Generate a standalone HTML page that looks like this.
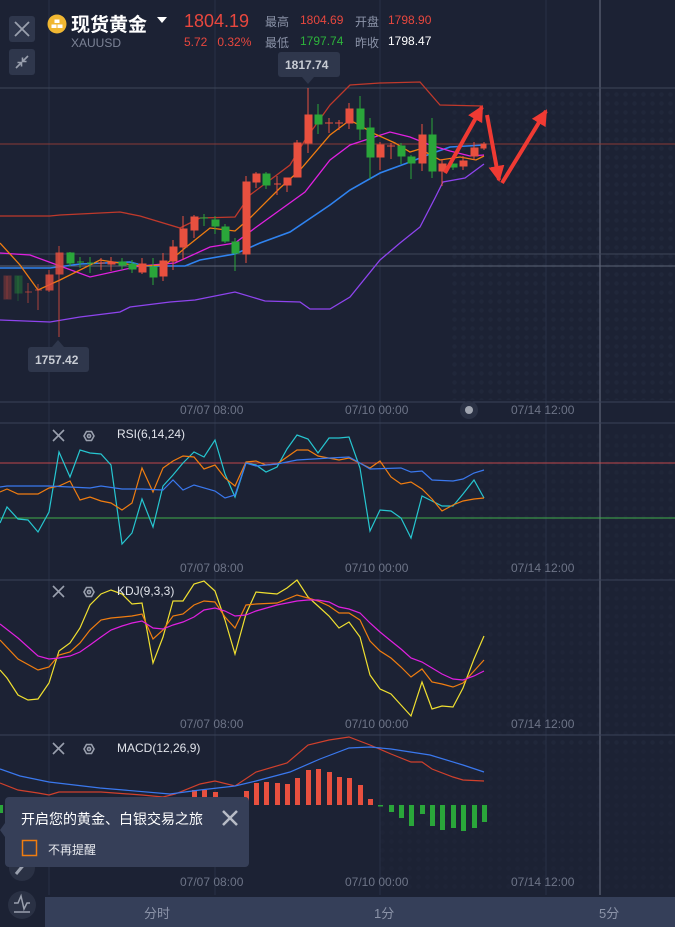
<!DOCTYPE html>
<html><head><meta charset="utf-8"><style>
html,body{margin:0;padding:0;background:#1c2234;width:675px;height:927px;overflow:hidden;font-family:"Liberation Sans","Noto Sans CJK SC",sans-serif}
.a{position:absolute;white-space:nowrap}
</style></head><body>
<svg class="a" style="left:0;top:0" width="675" height="927" xmlns="http://www.w3.org/2000/svg">
<defs>
<marker id="ah" markerUnits="userSpaceOnUse" markerWidth="18" markerHeight="16" refX="14" refY="8" orient="auto"><polygon points="0,0 16,8 0,16" fill="#f03a33"/></marker>
<pattern id="dots" width="9" height="9" patternUnits="userSpaceOnUse"><circle cx="4.5" cy="4.5" r="2.2" fill="#252c40"/></pattern>
</defs>
<rect x="450" y="90" width="225" height="310" fill="url(#dots)" opacity="0.5"/>
<rect x="460" y="430" width="215" height="150" fill="url(#dots)" opacity="0.35"/>
<rect x="460" y="585" width="215" height="160" fill="url(#dots)" opacity="0.3"/>
<rect x="380" y="740" width="295" height="150" fill="url(#dots)" opacity="0.25"/>
<g stroke="#283046" stroke-width="1">
<line x1="49" y1="0" x2="49" y2="895"/><line x1="215" y1="0" x2="215" y2="895"/><line x1="380" y1="0" x2="380" y2="895"/><line x1="546" y1="0" x2="546" y2="895"/>
</g>
<line x1="600" y1="0" x2="600" y2="895" stroke="#6b7285" stroke-width="1"/>
<line x1="0" y1="88" x2="675" y2="88" stroke="#3e4659"/>
<line x1="0" y1="254" x2="675" y2="254" stroke="#3e4659"/>
<line x1="0" y1="266" x2="675" y2="266" stroke="#5d6476"/>
<line x1="0" y1="144" x2="675" y2="144" stroke="#8a3a36"/>
<line x1="0" y1="402" x2="675" y2="402" stroke="#3a4258"/>
<line x1="0" y1="423" x2="675" y2="423" stroke="#3a4258"/>
<line x1="0" y1="580" x2="675" y2="580" stroke="#3a4258"/>
<line x1="0" y1="735" x2="675" y2="735" stroke="#3a4258"/>
<g transform="translate(0,80)" fill="none" stroke-width="1.3">
<polyline stroke="#c0392b" points="0,136 50,136 60,135 120,132 140,136 180,148 200,138 235,137 250,115 290,85 305,60 330,25 350,5 380,3 420,2 440,25 483,26"/>
<polyline stroke="#8e44ee" points="0,240 50,242 80,237 120,232 130,227 170,222 195,220 235,212 265,221 300,222 310,229 330,229 350,217 380,180 400,163 420,147 435,118 443,102 465,98 484,84"/>
<polyline stroke="#2f83f0" stroke-width="1.6" points="0,188 50,188 80,184 130,182 145,186 185,186 200,180 235,174 260,163 290,152 330,125 350,110 380,93 410,82 430,74 450,67 484,65"/>
<polyline stroke="#e020e0" points="0,173 30,175 60,186 90,197 140,186 175,183 210,167 235,163 255,148 280,130 305,112 330,80 350,65 390,52 410,57 430,65 450,71 470,76 484,75"/>
<polyline stroke="#f07d10" points="0,163 20,185 38,210 60,200 100,180 140,186 165,185 185,168 210,148 235,151 250,138 280,108 300,90 330,55 350,40 375,54 395,63 410,72 420,69 440,80 460,77 476,80 484,76"/>
</g>
<g transform="translate(0,80)" stroke-width="1">
<g fill="#e8503f" stroke="#e8503f">
<line x1="7" y1="196" x2="7" y2="219" opacity=".3"/><rect x="4" y="196" width="7" height="23" opacity=".3"/>
<line x1="28" y1="203" x2="28" y2="223" opacity=".6"/><line x1="25" y1="212" x2="32" y2="212" opacity=".6"/>
<line x1="38" y1="204" x2="38" y2="230" opacity=".7"/><line x1="35" y1="210" x2="42" y2="210" opacity=".7"/>
<line x1="49" y1="190" x2="49" y2="212" opacity=".8"/><rect x="46" y="195" width="7" height="15" opacity=".8"/>
<line x1="59" y1="166" x2="59" y2="257" opacity=".8"/><rect x="56" y="173" width="7" height="21" opacity=".8"/>
<line x1="101" y1="178" x2="101" y2="190"/><line x1="98" y1="183" x2="105" y2="183"/>
<line x1="111" y1="177" x2="111" y2="191"/><rect x="108" y="182" width="7" height="2"/>
<line x1="142" y1="178" x2="142" y2="194"/><rect x="139" y="184" width="7" height="8"/>
<line x1="163" y1="173" x2="163" y2="201"/><rect x="160" y="181" width="7" height="15"/>
<line x1="173" y1="160" x2="173" y2="190"/><rect x="170" y="167" width="7" height="14"/>
<line x1="183" y1="136" x2="183" y2="180"/><rect x="180" y="149" width="7" height="18"/>
<line x1="194" y1="135" x2="194" y2="158"/><rect x="191" y="137" width="7" height="13"/>
<line x1="246" y1="96" x2="246" y2="183"/><rect x="243" y="102" width="7" height="72"/>
<line x1="256" y1="92" x2="256" y2="108"/><rect x="253" y="94" width="7" height="8"/>
<line x1="277" y1="96" x2="277" y2="115"/><line x1="274" y1="104" x2="281" y2="104"/>
<line x1="287" y1="98" x2="287" y2="112"/><rect x="284" y="98" width="7" height="7"/>
<line x1="297" y1="60" x2="297" y2="97"/><rect x="294" y="63" width="7" height="34"/>
<line x1="308" y1="8" x2="308" y2="73"/><rect x="305" y="35" width="7" height="28"/>
<line x1="329" y1="38" x2="329" y2="53"/><line x1="325" y1="43" x2="333" y2="43"/>
<line x1="339" y1="40" x2="339" y2="50"/><line x1="335" y1="43" x2="343" y2="43"/>
<line x1="349" y1="23" x2="349" y2="49"/><rect x="346" y="29" width="7" height="14"/>
<line x1="380" y1="62" x2="380" y2="90"/><rect x="377" y="65" width="7" height="12"/>
<line x1="391" y1="63" x2="391" y2="79"/><line x1="387" y1="66" x2="395" y2="66"/>
<line x1="422" y1="44" x2="422" y2="91"/><rect x="419" y="55" width="7" height="28"/>
<line x1="442" y1="79" x2="442" y2="106"/><rect x="439" y="84" width="7" height="7"/>
<line x1="463" y1="76" x2="463" y2="90"/><rect x="460" y="81" width="7" height="5"/>
<line x1="474" y1="62" x2="474" y2="80"/><rect x="471" y="68" width="7" height="8"/>
<line x1="484" y1="62" x2="484" y2="70"/><rect x="481" y="64" width="5" height="4"/>
</g>
<g fill="#2aa63a" stroke="#2aa63a">
<line x1="18" y1="196" x2="18" y2="221" opacity=".35"/><rect x="15" y="196" width="7" height="17" opacity=".35"/>
<line x1="70" y1="172" x2="70" y2="186"/><rect x="67" y="173" width="7" height="10"/>
<line x1="80" y1="177" x2="80" y2="188"/><line x1="77" y1="182" x2="84" y2="182"/>
<line x1="90" y1="177" x2="90" y2="193"/><line x1="87" y1="183" x2="94" y2="183"/>
<line x1="122" y1="178" x2="122" y2="190"/><rect x="119" y="182" width="7" height="3"/>
<line x1="132" y1="180" x2="132" y2="193"/><rect x="129" y="184" width="7" height="5"/>
<line x1="153" y1="178" x2="153" y2="205"/><rect x="150" y="187" width="7" height="10"/>
<line x1="204" y1="134" x2="204" y2="146"/><line x1="200" y1="138" x2="208" y2="138"/>
<line x1="215" y1="136" x2="215" y2="154"/><rect x="212" y="140" width="7" height="6"/>
<line x1="225" y1="144" x2="225" y2="163"/><rect x="222" y="147" width="7" height="14"/>
<line x1="235" y1="158" x2="235" y2="191"/><rect x="232" y="162" width="7" height="11"/>
<line x1="266" y1="92" x2="266" y2="109"/><rect x="263" y="94" width="7" height="11"/>
<line x1="318" y1="24" x2="318" y2="54"/><rect x="315" y="35" width="7" height="9"/>
<line x1="360" y1="16" x2="360" y2="60"/><rect x="357" y="29" width="7" height="20"/>
<line x1="370" y1="38" x2="370" y2="99"/><rect x="367" y="48" width="7" height="29"/>
<line x1="401" y1="63" x2="401" y2="84"/><rect x="398" y="66" width="7" height="10"/>
<line x1="411" y1="75" x2="411" y2="99"/><rect x="408" y="77" width="7" height="6"/>
<line x1="432" y1="38" x2="432" y2="98"/><rect x="429" y="55" width="7" height="36"/>
<line x1="453" y1="84" x2="453" y2="90"/><rect x="450" y="84" width="7" height="3"/>
</g>
</g>
<g stroke="#f03a33" stroke-width="4" fill="none" marker-end="url(#ah)">
<line x1="445" y1="173" x2="482" y2="107"/>
<line x1="487" y1="115" x2="499" y2="180"/>
<line x1="502" y1="183" x2="546" y2="111"/>
</g>
<line x1="0" y1="463" x2="675" y2="463" stroke="#c0474a"/>
<line x1="0" y1="518" x2="675" y2="518" stroke="#3fae4a"/>
<g fill="none" stroke-width="1.2">
<polyline stroke="#26c6d0" points="0,523 7,507 18,519 28,520 38,532 49,512 59,452 70,477 80,450 90,453 101,454 111,465 122,544 132,533 142,499 153,527 163,486 173,475 183,463 194,452 204,457 215,440 225,474 235,497 246,463 256,465 266,472 277,467 287,449 297,435 308,439 318,453 329,438 339,438 349,437 360,468 370,531 380,510 391,511 401,518 411,538 422,496 432,501 442,506 453,506 463,494 474,480 484,498"/>
<polyline stroke="#f07d10" points="0,492 7,489 18,494 38,494 49,488 59,486 70,481 80,500 90,497 101,501 111,503 122,510 132,503 142,468 153,492 163,468 173,461 183,456 194,457 204,469 215,465 225,478 235,486 246,462 256,461 266,465 277,464 297,450 308,450 318,456 339,460 349,458 370,468 380,461 391,477 401,484 411,482 422,489 432,499 442,511 453,505 463,501 474,499 484,498"/>
<polyline stroke="#3a78ee" points="0,487 7,486 28,486 49,486 70,487 90,488 101,486 122,489 142,489 163,490 173,480 183,490 194,485 215,491 225,498 235,495 246,463 256,466 277,464 297,460 330,458 349,457 360,463 370,469 401,468 411,472 422,471 432,480 453,481 463,479 474,473 484,470"/>
</g>
<g fill="none" stroke-width="1.2">
<polyline stroke="#f0e030" points="0,670 7,678 18,695 28,700 38,699 49,683 59,651 70,643 80,628 90,605 101,594 111,590 122,594 132,604 142,603 153,663 163,637 173,601 183,601 194,584 204,581 215,591 225,620 235,654 246,614 256,592 266,593 277,594 287,588 297,580 308,597 318,606 329,616 339,628 349,622 360,637 370,675 380,689 391,694 401,705 411,716 422,682 432,709 442,706 453,707 463,688 474,659 484,636"/>
<polyline stroke="#f07d10" points="0,640 18,659 38,670 49,667 59,655 70,652 80,643 90,630 101,620 111,618 122,617 132,616 142,614 153,639 163,630 173,616 183,614 194,605 204,601 215,602 225,617 235,628 246,605 256,604 277,603 297,595 308,598 318,601 329,606 339,613 349,613 360,620 370,641 380,651 391,658 401,667 411,677 422,669 432,682 442,684 453,687 463,683 474,671 484,660"/>
<polyline stroke="#e020e0" points="0,624 18,638 38,656 49,659 59,658 70,656 80,652 90,645 101,637 111,630 122,626 132,623 142,621 153,628 163,629 173,625 183,622 194,617 204,610 215,608 225,611 235,616 246,615 256,611 277,605 297,601 308,600 318,600 329,602 339,607 349,609 360,613 370,623 380,632 391,641 401,649 411,658 422,662 432,668 442,674 453,679 463,680 474,676 484,671"/>
</g>
<g fill="#e8503f">
<rect x="192" y="790" width="5" height="15"/><rect x="202" y="790" width="5" height="15"/><rect x="213" y="792" width="5" height="13"/><rect x="223" y="797" width="5" height="8"/><rect x="244" y="791" width="5" height="14"/><rect x="254" y="783" width="5" height="22"/><rect x="264" y="782" width="5" height="23"/><rect x="275" y="783" width="5" height="22"/><rect x="285" y="784" width="5" height="21"/><rect x="295" y="778" width="5" height="27"/><rect x="306" y="770" width="5" height="35"/><rect x="316" y="769" width="5" height="36"/><rect x="327" y="772" width="5" height="33"/><rect x="337" y="777" width="5" height="28"/><rect x="347" y="778" width="5" height="27"/><rect x="358" y="785" width="5" height="20"/><rect x="368" y="799" width="5" height="6"/>
</g>
<g fill="#2aa63a">
<rect x="378" y="805" width="5" height="1.5"/><rect x="389" y="805" width="5" height="7"/><rect x="399" y="805" width="5" height="13"/><rect x="409" y="805" width="5" height="21"/><rect x="420" y="805" width="5" height="9"/><rect x="430" y="805" width="5" height="21"/><rect x="440" y="805" width="5" height="25"/><rect x="451" y="805" width="5" height="23"/><rect x="461" y="805" width="5" height="26"/><rect x="472" y="805" width="5" height="23"/><rect x="482" y="805" width="5" height="17"/>
<rect x="0" y="805" width="3" height="8"/>
</g>
<g fill="none" stroke-width="1.2">
<polyline stroke="#d0402c" points="0,783 18,790 38,793 49,795 59,792 101,792 142,795 163,797 175,794 200,784 215,781 235,786 256,772 287,763 308,745 329,740 349,737 370,745 391,754 411,762 422,762 432,769 453,777 463,780 484,781"/>
<polyline stroke="#3a78ee" points="0,769 20,776 49,782 100,788 170,794 200,790 235,786 256,781 290,772 320,759 349,748 370,747 391,749 430,755 463,765 484,772"/>
</g>
<g stroke="#9aa0ae" stroke-width="1.6" fill="none">
<path d="M53 430 L64 441 M64 430 L53 441"/><path d="M53 586 L64 597 M64 586 L53 597"/><path d="M53 743 L64 754 M64 743 L53 754"/>
<polygon points="84,436 86.5,431.5 91.5,431.5 94,436 91.5,440.5 86.5,440.5"/><circle cx="89" cy="436" r="1.6"/>
<polygon points="84,592 86.5,587.5 91.5,587.5 94,592 91.5,596.5 86.5,596.5"/><circle cx="89" cy="592" r="1.6"/>
<polygon points="84,749 86.5,744.5 91.5,744.5 94,749 91.5,753.5 86.5,753.5"/><circle cx="89" cy="749" r="1.6"/>
</g>
<rect x="9" y="16" width="26" height="26" rx="3" fill="#2f374c"/>
<path d="M15 22 L29 36 M29 22 L15 36" stroke="#9aa0ae" stroke-width="1.8"/>
<rect x="9" y="49" width="26" height="26" rx="3" fill="#2f374c"/>
<path d="M16 68 L21 63 M17.5 62.5 L21.5 62.5 L21.5 66.5 M28 56 L23 61 M22.5 57.5 L22.5 61.5 L26.5 61.5" stroke="#9aa0ae" stroke-width="1.6" fill="none"/>
<circle cx="57" cy="24" r="9.5" fill="#f0b732"/>
<rect x="54.5" y="19.5" width="5" height="3.5" fill="#fff"/><rect x="51.5" y="24.5" width="5" height="3.5" fill="#fff"/><rect x="57.5" y="24.5" width="5" height="3.5" fill="#fff"/>
<polygon points="157,17 167,17 162,23" fill="#fff"/>
<rect x="278" y="52" width="62" height="25" rx="3" fill="#2f374c"/><polygon points="302,77 314,77 308,84" fill="#2f374c"/>
<rect x="28" y="347" width="61" height="25" rx="3" fill="#2f374c"/><polygon points="52,347 64,347 58,340" fill="#2f374c"/>
<circle cx="469" cy="410" r="9" fill="#2a3144"/><circle cx="469" cy="410" r="4" fill="#a0a5b0"/>
<circle cx="22" cy="868" r="13" fill="#2a3144"/><path d="M16 874 L26 862" stroke="#9aa0ae" stroke-width="3"/>
<circle cx="22" cy="905" r="14" fill="#2a3144"/>
<path d="M14 903 L18 903 L21 896 L24 909 L27 903 L30 903 M14 912 L30 912" stroke="#9aa0ae" stroke-width="1.5" fill="none"/>
<rect x="45" y="897" width="630" height="30" fill="#353f59"/>
<rect x="5" y="797" width="244" height="70" rx="4" fill="#363f58"/>
<polygon points="5,823 0,830 5,837" fill="#363f58"/>
<path d="M223 811 L237 825 M237 811 L223 825" stroke="#b8bcc6" stroke-width="2.5"/>
<rect x="22.5" y="840.5" width="14" height="15" fill="none" stroke="#f07d10" stroke-width="1.5"/>
</svg>
<div class="a" style="left:71px;top:10px;font-size:19px;color:#fff;font-weight:bold">现货黄金</div>
<div class="a" style="left:71px;top:36px;font-size:12px;color:#7c8396">XAUUSD</div>
<div class="a" style="left:184px;top:11px;font-size:18px;color:#e8473e">1804.19</div>
<div class="a" style="left:184px;top:35px;font-size:12px;color:#e8473e">5.72&nbsp;&nbsp;&nbsp;0.32%</div>
<div class="a" style="left:265px;top:13px;font-size:12px;color:#8b93a8">最高</div>
<div class="a" style="left:300px;top:13px;font-size:12px;color:#e8473e">1804.69</div>
<div class="a" style="left:355px;top:13px;font-size:12px;color:#8b93a8">开盘</div>
<div class="a" style="left:388px;top:13px;font-size:12px;color:#e8473e">1798.90</div>
<div class="a" style="left:265px;top:34px;font-size:12px;color:#8b93a8">最低</div>
<div class="a" style="left:300px;top:34px;font-size:12px;color:#2db33b">1797.74</div>
<div class="a" style="left:355px;top:34px;font-size:12px;color:#8b93a8">昨收</div>
<div class="a" style="left:388px;top:34px;font-size:12px;color:#fff">1798.47</div>
<div class="a" style="left:285px;top:58px;font-size:12px;color:#c8ccd4;font-weight:bold">1817.74</div>
<div class="a" style="left:35px;top:353px;font-size:12px;color:#c8ccd4;font-weight:bold">1757.42</div>
<div class="a" style="left:180px;top:403px;font-size:12px;color:#6d7487">07/07 08:00</div>
<div class="a" style="left:345px;top:403px;font-size:12px;color:#6d7487">07/10 00:00</div>
<div class="a" style="left:511px;top:403px;font-size:12px;color:#6d7487">07/14 12:00</div>
<div class="a" style="left:180px;top:561px;font-size:12px;color:#6d7487">07/07 08:00</div>
<div class="a" style="left:345px;top:561px;font-size:12px;color:#6d7487">07/10 00:00</div>
<div class="a" style="left:511px;top:561px;font-size:12px;color:#6d7487">07/14 12:00</div>
<div class="a" style="left:180px;top:717px;font-size:12px;color:#6d7487">07/07 08:00</div>
<div class="a" style="left:345px;top:717px;font-size:12px;color:#6d7487">07/10 00:00</div>
<div class="a" style="left:511px;top:717px;font-size:12px;color:#6d7487">07/14 12:00</div>
<div class="a" style="left:180px;top:875px;font-size:12px;color:#6d7487">07/07 08:00</div>
<div class="a" style="left:345px;top:875px;font-size:12px;color:#6d7487">07/10 00:00</div>
<div class="a" style="left:511px;top:875px;font-size:12px;color:#6d7487">07/14 12:00</div>
<div class="a" style="left:117px;top:427px;font-size:12px;color:#e0e3ea">RSI(6,14,24)</div>
<div class="a" style="left:117px;top:584px;font-size:12px;color:#e0e3ea">KDJ(9,3,3)</div>
<div class="a" style="left:117px;top:741px;font-size:12px;color:#e0e3ea">MACD(12,26,9)</div>
<div class="a" style="left:21px;top:809px;font-size:14px;color:#fff">开启您的黄金、白银交易之旅</div>
<div class="a" style="left:48px;top:841px;font-size:12px;color:#e8eaef">不再提醒</div>
<div class="a" style="left:144px;top:903px;font-size:13px;color:#8b93a8">分时</div>
<div class="a" style="left:374px;top:903px;font-size:13px;color:#8b93a8">1分</div>
<div class="a" style="left:599px;top:903px;font-size:13px;color:#8b93a8">5分</div>
</body></html>
